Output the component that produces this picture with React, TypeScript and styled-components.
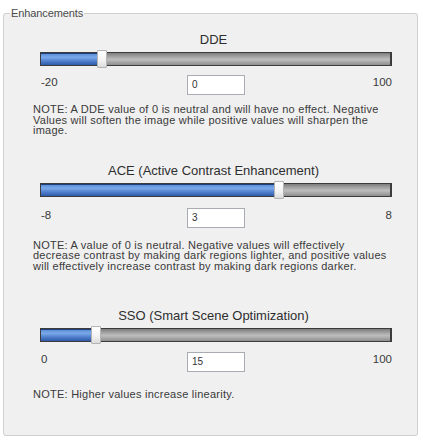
import React from 'react';
import styled, { createGlobalStyle } from 'styled-components';

const GlobalStyle = createGlobalStyle`
  html, body {
    margin: 0;
    padding: 0;
    background: #ffffff;
  }
  body {
    font-family: "Liberation Sans", Arial, sans-serif;
    color: #2b2b2b;
  }
`;

const GroupBox = styled.fieldset`
  box-sizing: border-box;
  width: 415px;
  height: 429px;
  margin: 7px 0 0 3px;
  padding: 0 6px;
  border: 1px solid #d0d0d0;
  border-radius: 3px;
  background: #f0f0f0;
  min-width: 0;
`;

const Legend = styled.legend`
  padding: 0 1px;
  font-size: 11px;
  line-height: 12px;
  letter-spacing: -0.1px;
  color: #4a4a4a;
`;

const Section = styled.section<{ $top: number }>`
  display: flex;
  flex-direction: column;
  margin-top: ${({ $top }) => $top}px;
`;

const Title = styled.div`
  font-size: 13px;
  line-height: 16px;
  text-align: center;
  color: #2e2e2e;
  padding-left: 6px;
`;

const SliderArea = styled.div`
  margin: 4px 19px 0 30px;
`;

const Track = styled.div`
  position: relative;
  box-sizing: border-box;
  height: 14px;
  border: 1px solid #3c3c3c;
  border-right-width: 2px;
  background: linear-gradient(to bottom, #7d7d7d 0%, #a9a9a9 35%, #bdbdbd 55%, #8e8e8e 100%);
`;

const Fill = styled.div`
  position: absolute;
  left: 0;
  top: 0;
  bottom: 0;
  background: linear-gradient(to bottom, #5d8fd8 0%, #7aa8ea 30%, #4f7fcc 65%, #2f5aa8 100%);
  border-top: 1px solid #1f3f7a;
  box-sizing: border-box;
`;

const Thumb = styled.div`
  position: absolute;
  top: -3px;
  width: 10px;
  height: 18px;
  box-sizing: border-box;
  border: 1px solid #b4b4b4;
  border-radius: 1px;
  background: linear-gradient(to bottom, #ffffff 0%, #f2f2f2 60%, #dcdcdc 100%);
`;

const ValueRow = styled.div<{ $gap: number }>`
  display: grid;
  grid-template-columns: 1fr auto 1fr;
  align-items: start;
  margin: ${({ $gap }) => $gap}px 19px 0 30px;
`;

const RangeLabel = styled.span<{ $end?: boolean }>`
  font-size: 11.5px;
  line-height: 13px;
  margin-top: 1px;
  color: #3a3a3a;
  text-align: ${({ $end }) => ($end ? 'right' : 'left')};
  padding-left: ${({ $end }) => ($end ? 0 : 1)}px;
`;

const ValueBox = styled.div`
  box-sizing: border-box;
  width: 58px;
  height: 20px;
  border: 1px solid #a9acb2;
  background: #ffffff;
  font-size: 10px;
  line-height: 18px;
  padding-left: 4px;
  color: #333;
`;

const Note = styled.p<{ $gap: number }>`
  margin: ${({ $gap }) => $gap}px 0 0 23px;
  font-size: 11px;
  line-height: 10.5px;
  letter-spacing: 0.25px;
  color: #3a3a3a;
`;

type SliderProps = {
  min: number;
  max: number;
  value: number;
};

const THUMB = 10;
const TRACK = 351;

const Slider: React.FC<SliderProps> = ({ min, max, value }) => {
  const pos = Math.round(((value - min) / (max - min)) * (TRACK - THUMB));
  return (
    <SliderArea>
      <Track>
        <Fill style={{ width: pos + 2 }} />
        <Thumb style={{ left: pos - 1 }} />
      </Track>
    </SliderArea>
  );
};

type Setting = {
  title: string;
  min: number;
  max: number;
  value: number;
  note: string[];
  top: number;
  rowGap: number;
  noteGap: number;
};

const SETTINGS: Setting[] = [
  {
    title: 'DDE',
    min: -20,
    max: 100,
    value: 0,
    top: 13,
    rowGap: 9,
    noteGap: 9,
    note: [
      'NOTE: A DDE value of 0 is neutral and will have no effect. Negative',
      'Values will soften the image while positive values will sharpen the',
      'image.',
    ],
  },
  {
    title: 'ACE (Active Contrast Enhancement)',
    min: -8,
    max: 8,
    value: 3,
    top: 27,
    rowGap: 11,
    noteGap: 12,
    note: [
      'NOTE: A value of 0 is neutral. Negative values will effectively',
      'decrease contrast by making dark regions lighter, and positive values',
      'will effectively increase contrast by making dark regions darker.',
    ],
  },
  {
    title: 'SSO (Smart Scene Optimization)',
    min: 0,
    max: 100,
    value: 15,
    top: 37,
    rowGap: 10,
    noteGap: 17,
    note: ['NOTE: Higher values increase linearity.'],
  },
];

const Row: React.FC<{ s: Setting }> = ({ s }) => (
  <Section $top={s.top}>
    <Title>{s.title}</Title>
    <Slider min={s.min} max={s.max} value={s.value} />
    <ValueRow $gap={s.rowGap}>
      <RangeLabel>{s.min}</RangeLabel>
      <ValueBox>{s.value}</ValueBox>
      <RangeLabel $end>{s.max}</RangeLabel>
    </ValueRow>
    <Note $gap={s.noteGap}>
      {s.note.map((line, i) => (
        <React.Fragment key={i}>
          {line}
          {i < s.note.length - 1 && <br />}
        </React.Fragment>
      ))}
    </Note>
  </Section>
);

export default function App() {
  return (
    <>
      <GlobalStyle />
      <GroupBox>
        <Legend>Enhancements</Legend>
        {SETTINGS.map((s) => (
          <Row key={s.title} s={s} />
        ))}
      </GroupBox>
    </>
  );
}
